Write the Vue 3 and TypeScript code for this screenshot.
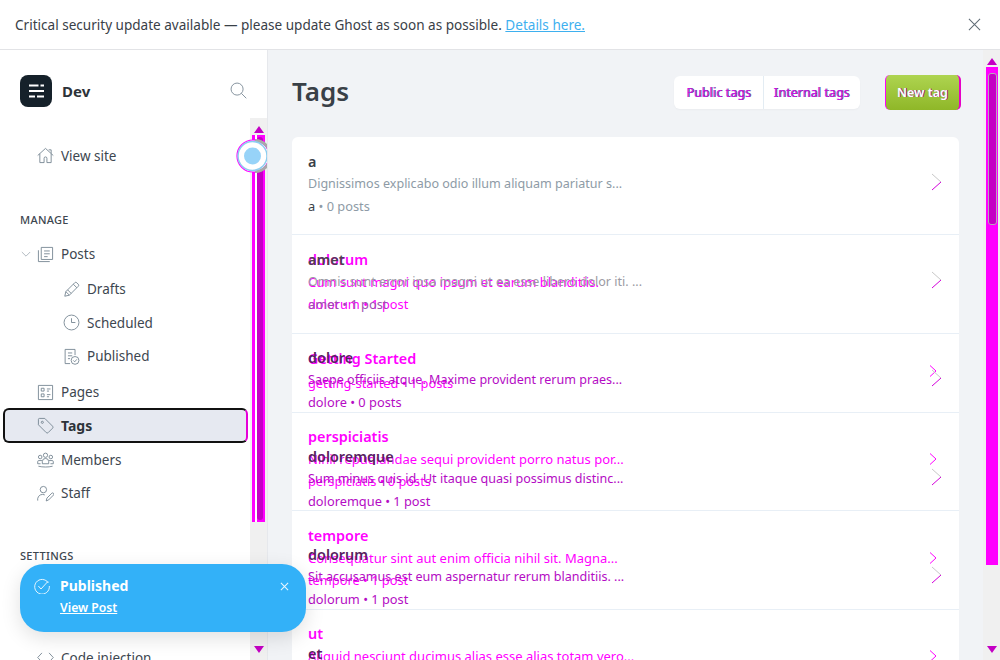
<script setup lang="ts">
interface NavItem {
  label: string;
  icon: string;
  sub?: boolean;
  chevron?: boolean;
  active?: boolean;
  gap?: string;
}

// first list is the one that owns the separators, second one sits over it
interface TagRow {
  title: string;
  desc?: string;
  slug: string;
  count: string;
  tone?: string;
}

const icons: Record<string, string[]> = {
  home: ['M1 12 12 2l11 10', 'M4 9.5V22h6v-6a2 2 0 0 1 4 0v6h6V9.5', 'M16.5 4h3.5v5'],
  posts: ['M6 2h16v17H6z', 'M2 6v16h16', 'M10 7h8M10 11h8M10 15h5'],
  pencil: ['M2.5 21.5 4 15 16.5 2.5a2.1 2.1 0 0 1 3 0l2 2a2.1 2.1 0 0 1 0 3L9 20z', 'M14.5 4.5l5 5', 'M4 15l5 5', 'M6.5 12.5l5 5'],
  clock: ['M12 1.5a10.5 10.5 0 1 0 0 21a10.5 10.5 0 1 0 0-21z', 'M12 6v6h5.5'],
  published: ['M10 22H3V2h14v8', 'M7 7h6M7 11h6M7 15h3', 'M17 12a5.5 5.5 0 1 0 0 11a5.5 5.5 0 1 0 0-11z', 'M14.5 17.5l2 2 3-3.5'],
  pages: ['M2 2h20v20H2z', 'M6 6h4v4H6z', 'M6 14h4v4H6z', 'M14 7h5M14 10h3M14 15h5M14 18h3'],
  tag: ['M2 3.5A1.5 1.5 0 0 1 3.5 2H11l11 11a2 2 0 0 1 0 2.8l-6.2 6.2a2 2 0 0 1-2.8 0L2 11z', 'M7.5 6a1.5 1.5 0 1 0 0 3a1.5 1.5 0 1 0 0-3z'],
  members: [
    'M12 3a3 3 0 1 0 0 6a3 3 0 1 0 0-6z',
    'M4.5 6a2.5 2.5 0 1 0 0 5a2.5 2.5 0 1 0 0-5z',
    'M19.5 6a2.5 2.5 0 1 0 0 5a2.5 2.5 0 1 0 0-5z',
    'M7.5 18v-3a4.5 4.5 0 0 1 9 0v3z',
    'M7 13.5H2.5A1.5 1.5 0 0 0 1 15v3h4',
    'M17 13.5h4.5A1.5 1.5 0 0 1 23 15v3h-4',
    'M2 21.5c6 1.5 14 1.5 20 0',
  ],
  staff: ['M9 2a4.5 4.5 0 1 0 0 9a4.5 4.5 0 1 0 0-9z', 'M1 22v-3a7 7 0 0 1 10-5', 'M13 22.5l1-4 7-7a1.8 1.8 0 0 1 2.5 2.5l-7 7z'],
  code: ['M7 5.5 1 12l6 6.5', 'M17 5.5 23 12l-6 6.5'],
};

const topNav: NavItem[] = [
  { label: 'Posts', icon: 'posts', chevron: true },
  { label: 'Drafts', icon: 'pencil', sub: true, gap: 'first-sub' },
  { label: 'Scheduled', icon: 'clock', sub: true },
  { label: 'Published', icon: 'published', sub: true },
  { label: 'Pages', icon: 'pages', gap: 'after-sub' },
  { label: 'Tags', icon: 'tag', active: true },
  { label: 'Members', icon: 'members' },
  { label: 'Staff', icon: 'staff' },
];

const rows: TagRow[] = [
  { title: 'a', desc: 'Dignissimos explicabo odio illum aliquam pariatur s...', slug: 'a', count: '0 posts', tone: 'plain' },
  { title: 'dolorum', desc: 'Cum sunt magni quo ipsum et earum blanditiis.', slug: 'dolorum', count: '1 post' },
  { title: 'Getting Started', slug: 'getting-started', count: '1 posts' },
  { title: 'perspiciatis', desc: 'Nihil repudiandae sequi provident porro natus por...', slug: 'perspiciatis', count: '0 posts' },
  { title: 'tempore', desc: 'Consequatur sint aut enim officia nihil sit. Magna...', slug: 'tempore', count: '1 post' },
  { title: 'ut', desc: 'Aliquid nesciunt ducimus alias esse alias totam vero...', slug: 'ut', count: '0 posts' },
];

const overRows: TagRow[] = [
  { title: 'amet', desc: 'Omnis sunt error ipsa magni ut ea esse libero dolor iti. ...', slug: 'amet', count: '1 post', tone: 'grey' },
  { title: 'dolore', desc: 'Saepe officiis atque. Maxime provident rerum praes...', slug: 'dolore', count: '0 posts' },
  { title: 'doloremque', desc: 'Sum minus quis id. Ut itaque quasi possimus distinc...', slug: 'doloremque', count: '1 post' },
  { title: 'dolorum', desc: 'Sit accusamus est eum aspernatur rerum blanditiis. ...', slug: 'dolorum', count: '1 post' },
  { title: 'et', desc: 'Quia dolor sit amet consectetur adipisci velit sed...', slug: 'et', count: '0 posts' },
];
</script>

<template>
  <div class="page">
    <div class="banner">
      <p class="banner-text">
        Critical security update available — please update Ghost as soon as possible.
        <a class="banner-link" href="#">Details here.</a>
      </p>
      <svg class="banner-close" viewBox="0 0 14 14"><path d="M1 1l12 12M13 1 1 13" /></svg>
    </div>

    <div class="shell">
      <aside class="sidebar">
        <div class="side-content">
          <div class="brand">
            <svg class="logo" viewBox="0 0 32 32">
              <rect width="32" height="32" rx="8" fill="#15212a" />
              <path d="M9 9.5h9.5v2H9zM20.5 9.5H24v2h-3.500zM9 15h15v2H9zM9 20.500h6v2H9zM17 20.500h7v2h-7z" fill="#fff" />
            </svg>
            <span class="brand-name">Dev</span>
            <svg class="search" viewBox="0 0 24 24"><path d="M10 1.500a8.500 8.500 0 1 0 0 17a8.500 8.500 0 1 0 0-17zM16 16l7 7" /></svg>
          </div>

          <a class="nav-item">
            <svg class="icon" viewBox="0 0 24 24"><path v-for="d in icons.home" :key="d" :d="d" /></svg>
            View site
          </a>

          <h4 class="section-title manage">Manage</h4>
          <a
            v-for="item in topNav"
            :key="item.label"
            class="nav-item"
            :class="[item.gap, { sub: item.sub, active: item.active }]"
          >
            <svg v-if="item.chevron" class="fold" viewBox="0 0 12 8"><path d="M1 1l5 5 5-5" /></svg>
            <svg class="icon" viewBox="0 0 24 24"><path v-for="d in icons[item.icon]" :key="d" :d="d" /></svg>
            {{ item.label }}
          </a>

          <h4 class="section-title settings">Settings</h4>
          <div class="hidden-gap"></div>
          <a class="nav-item">
            <svg class="icon" viewBox="0 0 24 24"><path v-for="d in icons.code" :key="d" :d="d" /></svg>
            Code injection
          </a>
        </div>

        <div class="bar side-bar">
          <i class="arrow up"></i>
          <div class="side-thumb"><div class="side-thumb-core"></div></div>
          <i class="arrow down"></i>
        </div>

        <svg class="toggle" viewBox="0 0 36 36">
          <circle cx="18" cy="18" r="16" fill="#fff" stroke="#ff00ff" stroke-width="1.200" />
          <path d="M20 2.500a15.500 15.500 0 0 1 0 31a15.500 15.500 0 0 0 0-31z" fill="#a9a9a9" stroke="#a9a9a9" stroke-width="3" />
          <circle cx="17.500" cy="18" r="14.500" fill="none" stroke="#8ccdf0" stroke-width="1.500" />
          <circle cx="17.500" cy="18" r="8.500" fill="#97d3f8" />
        </svg>
      </aside>

      <main class="main">
        <header class="head">
          <h1 class="head-title">Tags</h1>
          <div class="tabs">
            <button class="tab first">Public tags</button>
            <button class="tab second">Internal tags</button>
          </div>
          <button class="new-tag">New tag</button>
        </header>

        <section class="list">
          <div
            v-for="(row, i) in rows"
            :key="row.slug + i"
            class="row"
            :class="[row.tone, { short: !row.desc }]"
          >
            <div class="row-text">
              <h3 class="row-title">{{ row.title }}</h3>
              <p v-if="row.desc" class="row-desc">{{ row.desc }}</p>
              <p class="row-meta">{{ row.slug }} <span class="row-count">• {{ row.count }}</span></p>
            </div>
            <svg v-if="i > 1" class="chev thin" viewBox="0 0 8 12"><path d="M1 .5 7 6l-6 5.500" /></svg>
          </div>

          <div class="over">
            <div class="row same">
              <svg class="chev wide" viewBox="0 0 12 18"><path class="light" d="M1 1l9 8" /><path d="M10 9l-9 8" /></svg>
            </div>
            <div v-for="row in overRows" :key="row.slug + row.title" class="row" :class="row.tone">
              <div class="row-text">
                <h3 class="row-title">{{ row.title }}</h3>
                <p class="row-desc">{{ row.desc }}</p>
                <p class="row-meta">{{ row.slug }} <span class="row-count">• {{ row.count }}</span></p>
              </div>
              <svg class="chev wide" viewBox="0 0 12 18"><path class="light" d="M1 1l9 8" /><path d="M10 9l-9 8" /></svg>
            </div>
          </div>
        </section>
      </main>

      <div class="bar page-bar">
        <i class="arrow up"></i>
        <div class="page-thumb"><div class="page-thumb-core"></div></div>
        <i class="arrow down"></i>
      </div>
    </div>

    <div class="toast">
      <svg class="toast-check" viewBox="0 0 24 24">
        <path d="M21.500 7.500A11 11 0 1 0 23 12" />
        <path d="M6.500 12l4 4.500L21 5" />
      </svg>
      <div class="toast-body">
        <strong class="toast-title">Published</strong>
        <a class="toast-link" href="#">View Post</a>
      </div>
      <svg class="toast-close" viewBox="0 0 10 10"><path d="M1 1l8 8M9 1 1 9" /></svg>
    </div>
  </div>
</template>

<style>
html,
body {
  margin: 0;
  overflow: hidden;
}
</style>

<style scoped>
.page {
  position: relative;
  display: flex;
  flex-direction: column;
  width: 1000px;
  height: 660px;
  overflow: hidden;
  background: #fff;
  color: #394047;
  font-family: "Noto Sans", "Open Sans", sans-serif;
  font-size: 13.500px;
}

.banner {
  display: flex;
  align-items: center;
  justify-content: space-between;
  flex-shrink: 0;
  height: 49px;
  padding: 0 19px 0 15px;
  border-bottom: 1px solid #e2e3e6;
}

.banner-text {
  margin: 0;
  font-size: 13.560px;
}

.banner-link {
  color: #3eb0ef;
}

.banner-close {
  width: 13px;
  height: 13px;
  fill: none;
  stroke: #5f6b75;
  stroke-width: 1.100;
}

.shell {
  display: flex;
  flex: 1;
  min-height: 0;
}

.sidebar {
  position: relative;
  display: flex;
  flex-shrink: 0;
  width: 267px;
  border-right: 1px solid #e6e8ec;
  overflow: hidden;
}

.side-content {
  flex: 1;
  padding-top: 24px;
}

.brand {
  display: flex;
  align-items: center;
  height: 33px;
  padding-left: 20px;
  padding-right: 3px;
  margin-bottom: 32px;
}

.logo {
  width: 32px;
  height: 32px;
}

.brand-name {
  margin-left: 10px;
  font-size: 15px;
  font-weight: 700;
  color: #2d3339;
}

.search {
  width: 17px;
  height: 17px;
  margin-left: auto;
  fill: none;
  stroke: #7d8b97;
  stroke-width: 1.300;
}

.nav-item {
  position: relative;
  display: flex;
  align-items: center;
  gap: 7px;
  height: 33.500px;
  padding-left: 37px;
  box-sizing: border-box;
  font-size: 13.500px;
  color: #3d464f;
}

.nav-item.sub {
  padding-left: 63px;
}

.nav-item.first-sub {
  margin-top: 1.500px;
}

.nav-item.after-sub {
  margin-top: 2.500px;
}

.nav-item.active {
  height: 35px;
  margin: -1px 2px 0 3px;
  padding-left: 32px;
  border: 2px solid #111;
  border-right-color: #e600d8;
  border-radius: 6px;
  background: #e6e9f1;
  font-size: 14px;
  font-weight: 700;
  color: #2d3339;
}

.icon {
  flex-shrink: 0;
  width: 17px;
  height: 17px;
  fill: none;
  stroke: #6f7f8c;
  stroke-width: 1.200;
}

.fold {
  position: absolute;
  left: 21px;
  top: 13px;
  width: 10px;
  height: 7px;
  fill: none;
  stroke: #a3adb6;
}

.section-title {
  margin: 0;
  font-size: 11px;
  font-weight: 500;
  letter-spacing: 0.3px;
  text-transform: uppercase;
  padding-left: 20px;
  line-height: 16px;
  color: #3d464f;
}

.manage {
  margin-top: 39px;
  margin-bottom: 10px;
}

.settings {
  margin-top: 38px;
}

.hidden-gap {
  height: 77px;
}

.bar {
  position: relative;
  flex-shrink: 0;
  box-sizing: border-box;
  width: 17px;
  background: #f0f0f0;
}

.side-bar {
  margin-top: 68px;
  padding-top: 17px;
}

.side-thumb {
  box-sizing: border-box;
  width: 13px;
  height: 387px;
  margin-left: 2px;
  padding: 2px 2px 2px 5px;
  background: linear-gradient(90deg, #ff00ff 0 3px, #fff 3px 5px, #ff00ff 5px);
}

.side-thumb-core {
  height: 100%;
  border-radius: 3px;
  background: #c400c4;
}

.page-bar {
  padding-top: 17px;
}

.page-thumb {
  box-sizing: border-box;
  width: 12px;
  height: 498px;
  margin-left: 3px;
  padding: 6px 1px 0 2px;
  background: #ff00ff;
}

.page-thumb-core {
  height: 150px;
  border: 1px solid #b9a6bc;
  border-radius: 3px;
  background: #c400c4;
}

.arrow {
  position: absolute;
  left: 4px;
  width: 0;
  height: 0;
  border-left: 5px solid transparent;
  border-right: 5px solid transparent;
}

.arrow.up {
  top: 8px;
  border-bottom: 7px solid #c400c4;
}

.arrow.down {
  bottom: 7px;
  border-top: 7px solid #c400c4;
}

.toggle {
  position: absolute;
  left: 235px;
  top: 88px;
  width: 36px;
  height: 36px;
}

.main {
  flex: 1;
  min-width: 0;
  padding: 0 24px;
  overflow: hidden;
  background: #f1f3f6;
}

.head {
  display: flex;
  align-items: center;
  height: 87px;
}

.head-title {
  margin: 0 auto 6px 0;
  font-size: 26px;
  font-weight: 600;
  color: #394047;
}

.tabs {
  display: flex;
  margin: -3px 25px 0 0;
  border-radius: 6px;
  background: #fff;
  box-shadow: 0 1px 2px rgba(0, 0, 0, 0.03);
}

.tab {
  height: 33px;
  padding: 0;
  border: 0;
  background: none;
  font: 400 12.300px "Noto Sans", sans-serif;
  letter-spacing: 0.15px;
  color: #c814e4;
  text-shadow: 1px 0 0 #4a3a8c;
}

.tab.first {
  width: 90px;
  border-right: 1px solid #e3ecf3;
}

.tab.second {
  width: 96px;
  padding-right: 1px;
}

.new-tag {
  width: 76px;
  height: 35px;
  margin: -3px -2px 0 0;
  border: 0;
  border-left: 1px solid #ff00ff;
  border-right: 2px solid #e600c8;
  border-radius: 5px;
  background: linear-gradient(#aed450, #8fb728);
  font: 600 12.500px "Noto Sans", sans-serif;
  color: #fff;
  text-shadow: 1px 0 0 #8a1a8c;
}

.list {
  position: relative;
  border-radius: 6px 6px 0 0;
  background: #fff;
  color: #ff00ff;
}

.row {
  display: flex;
  align-items: center;
  justify-content: space-between;
  box-sizing: border-box;
  height: 98.400px;
  padding: 14px 17px 18px 16px;
  border-bottom: 1px solid #e8eff6;
}

.row.short {
  height: 79px;
}

.row.short .row-meta {
  margin-top: 2px;
}

.row-text {
  min-width: 0;
}

.row-title {
  margin: 0;
  font-size: 14.400px;
  line-height: 22px;
  font-weight: 600;
}

.row-desc,
.row-meta {
  margin: 0;
  line-height: 22px;
  white-space: nowrap;
}

.row-desc {
  font-size: 13px;
}

.row-meta {
  font-size: 12.800px;
}

.row.plain .row-title,
.row.plain .row-meta {
  color: #394047;
}

.row.plain .row-desc,
.row.plain .row-count {
  color: #8e9ba6;
}

.row.plain .row-desc,
.over .row-desc {
  font-size: 12.550px;
}

.over {
  position: absolute;
  inset: 0;
  color: #b40cc4;
  pointer-events: none;
}

.over .row {
  border-bottom-color: transparent;
}

.over .row-title {
  color: #57215f;
}

.over .row.grey .row-title {
  color: #4d4050;
}

.over .row.grey .row-desc {
  color: #9b9aa3;
}

.over .row.grey .row-meta {
  color: #a04fb0;
}

.over .row.same {
  justify-content: flex-end;
}

.chev {
  flex-shrink: 0;
  fill: none;
}

.chev.thin {
  width: 8px;
  height: 12px;
  margin: 0 5px 0 0;
  stroke: #ff00ff;
}

.chev.wide {
  width: 12px;
  height: 18px;
  margin: 0 -1px 4px 0;
  stroke: #d400dc;
}

.chev .light {
  stroke: #c8c8c8;
}

.toast {
  position: absolute;
  left: 20px;
  top: 564px;
  display: flex;
  box-sizing: border-box;
  width: 286px;
  height: 68px;
  padding: 14px 17px 0 14px;
  border-radius: 24px;
  background: #33b1f8;
  color: #fff;
  box-shadow: 0 6px 20px rgba(0, 0, 0, 0.12);
}

.toast-check {
  flex-shrink: 0;
  width: 16px;
  height: 16px;
  fill: none;
  stroke: #fff;
  stroke-width: 1.300;
}

.toast-body {
  display: flex;
  flex: 1;
  flex-direction: column;
  margin: -2px 0 0 10px;
}

.toast-title {
  font-size: 14px;
  line-height: 20px;
}

.toast-link {
  margin-top: 3px;
  font-size: 12.200px;
  font-weight: 600;
  color: #fff;
}

.toast-close {
  width: 9px;
  height: 9px;
  margin-top: 4px;
  fill: none;
  stroke: #e8f6ff;
  stroke-width: 1.200;
}
</style>
